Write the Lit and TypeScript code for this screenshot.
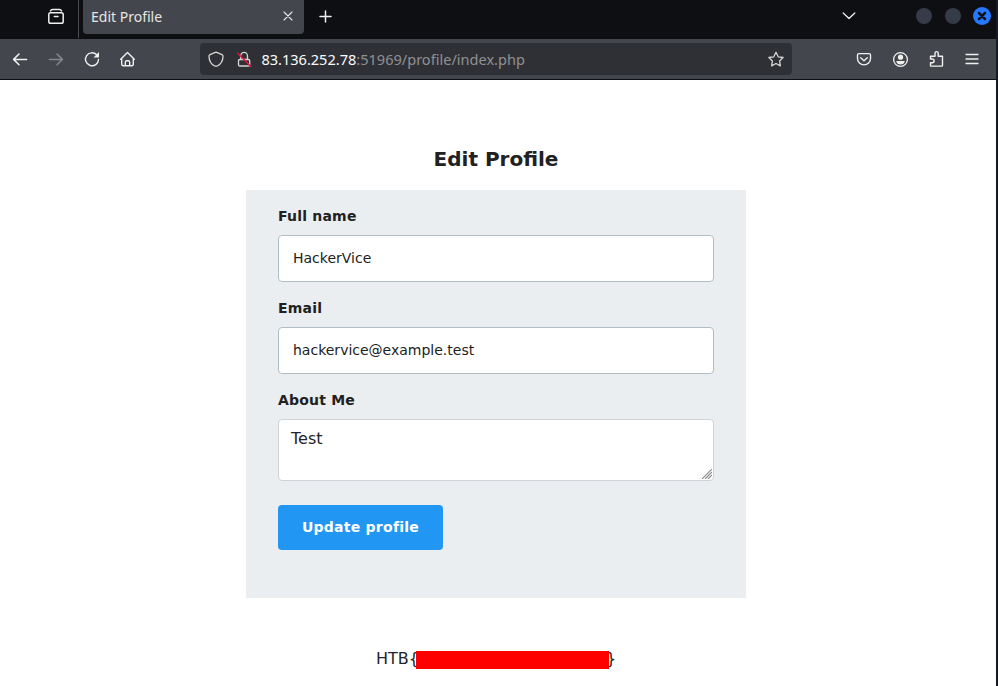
import { LitElement, html, css, svg } from "lit";
import { customElement, property } from "lit/decorators.js";

const icons: Record<string, unknown> = {
  archive: svg`<path d="M4.500 4.900Q5 3.500 6.500 3.500h7q1.500 0 2 1.400"/><rect x="2.800" y="6.800" width="14.400" height="10.500" rx="1.800"/><path d="M8.300 10.600h3.700"/>`,
  close: svg`<path stroke-width="1.1" d="m6 6 8 8M14 6l-8 8"/>`,
  plus: svg`<path d="M4 10.500h11M9.500 5v11"/>`,
  chevron: svg`<path stroke-width="1.300" d="m4.200 7 5.800 5.500L15.800 7"/>`,
  back: svg`<path d="M16.600 10.400H3.600M9 5l-5.400 5.400L9 15.800"/>`,
  forward: svg`<path d="M3.400 10.400h13M11 5l5.400 5.400-5.400 5.400"/>`,
  reload: svg`<path stroke-width="1.400" d="M14.700 5.800a6.500 6.500 0 1 0 1.800 4.700"/><path fill="currentColor" stroke="none" d="M17 3v5.500h-5.500z"/>`,
  home: svg`<path stroke-width="1.400" d="m2.700 10.300 6.800-6.700 6.800 6.700M3.700 9.800v5.500q0 1.500 1.500 1.500h8.600q1.500 0 1.500-1.500V9.800M7.300 16.500v-3.300q0-1.500 1.500-1.500h1.400q1.500 0 1.500 1.500v3.300"/>`,
  shield: svg`<path stroke-width="1.300" d="M10 3.200 16 5.600q1.100.5 1 1.800-.2 6.400-5.300 9.300-1.700 1-3.400 0Q3.200 13.800 3 7.400 2.900 6.100 4 5.600z"/>`,
  insecure: svg`<rect x="4.500" y="10.500" width="11.200" height="6.500" rx="1.300" stroke-width="1.300"/><path stroke-width="1.300" d="M6.700 10.300V7a3.400 3.700 0 0 1 6.800 0v3.300"/><path stroke="#e9113f" stroke-width="1.600" d="m3.700 4.200 13.200 13.300"/>`,
  star: svg`<path stroke-width="1.300" d="m10 3.300 2.200 4.500 4.900.7-3.500 3.500.8 4.900L10 14.500l-4.400 2.400.8-4.900-3.500-3.500 4.900-.7z"/>`,
  pocket: svg`<path stroke-width="1.400" d="M5 4.600h10q1.500 0 1.500 1.500v3.500a6.500 6.300 0 0 1-13 0V6.100Q3.500 4.600 5 4.600zM6.700 8.800l3.300 2.900 3.300-2.900"/>`,
  account: svg`<circle cx="10.500" cy="10.500" r="6.900" stroke-width="1.300"/><circle cx="10.500" cy="8.200" r="2.600" fill="currentColor" stroke="none"/><path fill="currentColor" stroke="none" d="M6.200 12h8.600q-.7 3.500-4.300 3.500T6.200 12z"/>`,
  extension: svg`<path stroke-width="1.400" d="M4.500 10V7.300H9V4.300a1.600 1.700 0 0 1 3.200 0v3h4.300v9.300q0 .5-.5.500H5q-.5 0-.5-.5V13.700H6.300a1.800 1.800 0 0 0 0-3.700z"/>`,
  menu: svg`<path stroke-width="1.300" d="M4 5.500h12M4 10h12M4 14.500h12"/>`,
};

@customElement("ui-icon")
export class UiIcon extends LitElement {
  @property() name = "";

  static styles = css`
    :host { display: block; flex: none; width: 20px; height: 20px; }
    svg { display: block; fill: none; stroke: currentColor; stroke-width: 1.5; stroke-linecap: round; stroke-linejoin: round; }
  `;

  render() {
    return html`<svg width="20" height="20" viewBox="0 0 20 20" aria-hidden="true">${icons[this.name]}</svg>`;
  }
}

@customElement("browser-chrome")
export class BrowserChrome extends LitElement {
  static styles = css`
    :host { display: block; color: #f0f0ee; font-family: "Noto Sans", sans-serif; }
    .titlebar { display: flex; height: 39px; background: #0d0f13; }
    .titlebar > ui-icon { margin-top: 6px; }
    .archive { margin-left: 46px; }
    .divider { width: 1px; height: 38px; margin: 0 4px 0 12px; background: #4a4b50; }
    .tab { display: flex; box-sizing: border-box; width: 221px; height: 34px; padding: 0 6px 0 8px; align-items: center; justify-content: space-between; background: #44464d; border-radius: 0 0 4px 4px; font-size: 14px; line-height: 34px; color: #e6e6e4; }
    .tab ui-icon { margin-bottom: 2px; }
    .new { margin-left: 12px; }
    .list { margin-left: auto; }
    .windows { display: flex; width: 137px; box-sizing: border-box; padding: 7px 5px 0 57px; gap: 13px; }
    .dot { width: 16px; height: 16px; margin-top: 1px; border-radius: 50%; background: #363b49; }
    .quit { display: block; margin-left: -1px; flex: none; }
    .toolbar { display: flex; align-items: center; box-sizing: border-box; height: 41px; padding: 0 14px 0 10px; background: #44464d; border-bottom: 1px solid #0d0f13; }
    .nav { display: flex; gap: 16px; width: 190px; }
    .forward { color: #85868a; }
    .address { display: flex; align-items: center; box-sizing: border-box; width: 592px; height: 32px; padding: 0 6px; background: #2f3035; border-radius: 4px; font-size: 14.55px; white-space: pre; color: #8f9092; }
    .address ui-icon { color: #d6d6d4; }
    .address .insecure { margin: 0 7.4px 0 8px; }
    .host { color: #fbfbfa; }
    .address .star { margin-left: auto; }
    .tools { display: flex; gap: 16px; margin-left: auto; }
  `;

  render() {
    return html`
      <div class="titlebar">
        <ui-icon class="archive" name="archive"></ui-icon>
        <div class="divider"></div>
        <div class="tab"><span>Edit Profile</span><ui-icon name="close"></ui-icon></div>
        <ui-icon class="new" name="plus"></ui-icon>
        <ui-icon class="list" name="chevron"></ui-icon>
        <div class="windows">
          <span class="dot"></span><span class="dot"></span>
          <svg class="quit" width="18" height="18" viewBox="0 0 18 18">
            <circle cx="9" cy="9" r="9" fill="#2777ff" />
            <path d="m6 6 6 6M12 6l-6 6" stroke="#11131a" stroke-width="2.500" stroke-linecap="round" />
          </svg>
        </div>
      </div>
      <div class="toolbar">
        <div class="nav">
          <ui-icon name="back"></ui-icon>
          <ui-icon class="forward" name="forward"></ui-icon>
          <ui-icon name="reload"></ui-icon>
          <ui-icon name="home"></ui-icon>
        </div>
        <div class="address">
          <ui-icon name="shield"></ui-icon>
          <ui-icon class="insecure" name="insecure"></ui-icon>
          <span><span class="host">83.136.252.78</span>:51969/profile/index.php</span>
          <ui-icon class="star" name="star"></ui-icon>
        </div>
        <div class="tools">
          <ui-icon name="pocket"></ui-icon>
          <ui-icon name="account"></ui-icon>
          <ui-icon name="extension"></ui-icon>
          <ui-icon name="menu"></ui-icon>
        </div>
      </div>
    `;
  }
}

@customElement("profile-page")
export class ProfilePage extends LitElement {
  static styles = css`
    :host { display: flex; flex-direction: column; align-items: center; padding-right: 4px; color: #212529; font-family: "DejaVu Sans", sans-serif; }
    h1 { margin: 64px 0 16px; font-size: 20px; line-height: 30px; font-weight: 700; color: #212121; }
    form { box-sizing: border-box; width: 500px; height: 408px; padding: 16px 32px; background: #ebeef1; }
    label { display: block; height: 21px; margin-bottom: 8px; font-size: 14px; line-height: 21px; font-weight: 700; letter-spacing: .2px; color: #212121; }
    input, textarea { display: block; box-sizing: border-box; width: 436px; margin: 0; background: #fff; border: 1px solid #b0bec5; border-radius: 4px; outline: 0; font-family: inherit; }
    input { height: 47px; margin-bottom: 16px; padding: 0 14px 2px; font-size: 14px; color: #212121; }
    textarea { height: 62px; margin-bottom: 24px; padding: 7px 12px 5px; font-size: 16px; line-height: 24px; color: #212529; border-color: #ced4da; resize: none; }
    .area { position: relative; }
    .grip { position: absolute; right: 2px; bottom: 2px; width: 10px; height: 10px; stroke: #888; stroke-width: 1.1; }
    button { display: block; width: 165px; height: 45px; padding: 0 0 1px; border: 0; border-radius: 4px; background: #2196f3; color: #fff; font: 700 14px "DejaVu Sans", sans-serif; letter-spacing: .25px; }
    .flag { display: flex; margin-top: 49px; font-size: 16px; line-height: 24px; }
    .redacted { width: 193px; height: 18px; margin: 4px -3px 0 -3px; background: #f00; z-index: 1; }
  `;

  render() {
    return html`
      <h1>Edit Profile</h1>
      <form>
        <label for="name">Full name</label>
        <input id="name" .value=${"HackerVice"} />
        <label for="email">Email</label>
        <input id="email" .value=${"hackervice@example.test"} />
        <label for="about">About Me</label>
        <div class="area">
          <textarea id="about" .value=${"Test"}></textarea>
          <svg class="grip" viewBox="0 0 10 10"><path d="M0 10 10 0M3 10l7-7M6 10l4-4" /></svg>
        </div>
        <button type="button">Update profile</button>
      </form>
      <div class="flag"><span>HTB{</span><span class="redacted"></span><span>}</span></div>
    `;
  }
}

@customElement("app-root")
export class AppRoot extends LitElement {
  static styles = css`
    :host { display: block; box-sizing: border-box; width: 998px; height: 686px; overflow: hidden; background: #fff; border-right: 2px solid #161a26; }
  `;

  render() {
    return html`<browser-chrome></browser-chrome><profile-page></profile-page>`;
  }
}
